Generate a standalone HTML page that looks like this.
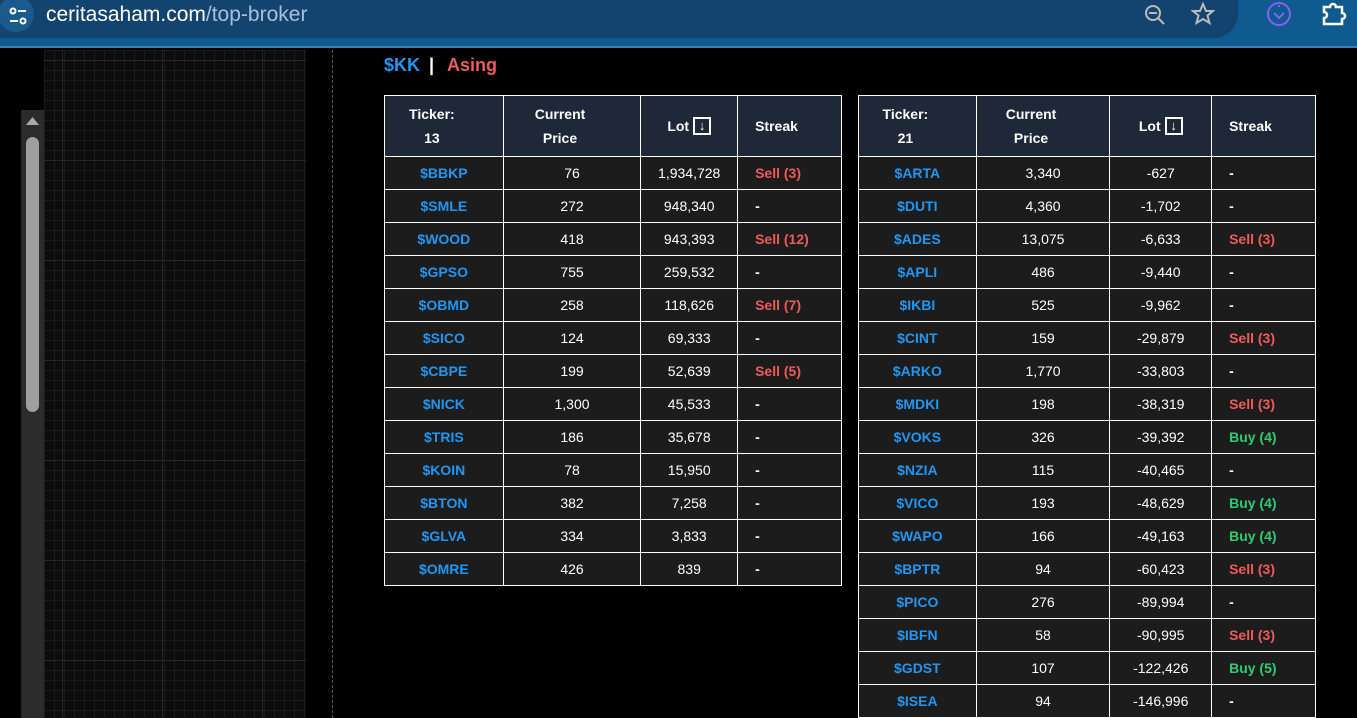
<!DOCTYPE html>
<html><head><meta charset="utf-8"><style>
*{margin:0;padding:0;box-sizing:border-box}
body{width:1357px;height:718px;background:#000;overflow:hidden;position:relative;font-family:"Liberation Sans",Arial,sans-serif}
.top{position:absolute;left:0;top:0;width:1357px;height:48px;background:#0f5a8e;border-bottom:2px solid #3d7fb0}
.pill{position:absolute;left:-20px;top:-10px;width:1258px;height:48px;background:#134470;border-radius:0 0 24px 0}
.ic{position:absolute;left:-2px;top:-4px;width:36px;height:36px;border-radius:50%;background:#1a5a8e}
.url{position:absolute;left:46px;top:3px;font-size:21px;color:#fff;letter-spacing:0}
.url span{color:#a9c0d6}
.left{position:absolute;left:44px;top:50px;width:262px;height:668px;background-color:#0c0c0c;
background-image:linear-gradient(#262626 1px,transparent 1px),linear-gradient(90deg,#262626 1px,transparent 1px),linear-gradient(#1a1a1a 1px,transparent 1px),linear-gradient(90deg,#1a1a1a 1px,transparent 1px);
background-size:100px 100px,100px 100px,10px 10px,10px 10px;background-position:0 10px,18px 0,0 0,0 0}
.sb{position:absolute;left:21px;top:110px;width:23px;height:608px;background:#2b2b2b}
.thumb{position:absolute;left:26px;top:137px;width:13px;height:275px;background:#9f9f9f;border-radius:7px}
.dash{position:absolute;left:332px;top:50px;height:668px;border-left:1px dashed #555}
.title{position:absolute;left:384px;top:55px;font-size:18px;font-weight:bold;white-space:nowrap}
table{position:absolute;border-collapse:collapse;font-size:14px;color:#fff}
td,th{border:1px solid #fff;height:33px;text-align:center;background:#1c1c1c}
th{background:#1e2838;height:61px;font-weight:bold;line-height:24px;padding-right:24px}
td.t{color:#2196f3;font-weight:bold}
td.s{text-align:left;padding-left:17px;font-weight:bold}
.sell{color:#f05a5a}.buy{color:#2ecc71}
.arr{display:inline-block;width:18px;height:18px;border:2px solid #fff;vertical-align:middle;font-size:13px;line-height:14px;margin-left:4px;margin-top:-3px}
</style></head><body>
<div class="top"><div class="pill"></div><div class="ic"></div>
<svg style="position:absolute;left:8px;top:6px" width="20" height="20" viewBox="0 0 20 20" fill="none" stroke="#fff" stroke-width="2"><circle cx="5" cy="5" r="2.5"/><line x1="10" y1="5" x2="18" y2="5"/><line x1="2" y1="15" x2="10" y2="15"/><circle cx="15" cy="15" r="2.5"/></svg>
<div class="url">ceritasaham.com<span>/top-broker</span></div>
<svg style="position:absolute;left:1143px;top:3px" width="24" height="24" viewBox="0 0 24 24" fill="none" stroke="#bbb" stroke-width="2"><circle cx="10" cy="10" r="7"/><line x1="6" y1="10" x2="14" y2="10"/><line x1="15" y1="15" x2="21" y2="21"/></svg>
<svg style="position:absolute;left:1191px;top:2px" width="24" height="24" viewBox="0 0 24 24" fill="none" stroke="#bbb" stroke-width="2"><path d="M12 2l3 7h7l-5.5 4.5 2 7.5L12 17l-6.5 4 2-7.5L2 9h7z"/></svg>
<svg style="position:absolute;left:1266px;top:1px" width="26" height="26" viewBox="0 0 26 26" fill="none" stroke="#8b5cf6" stroke-width="2"><circle cx="13" cy="13" r="11"/><path d="M8 12l5 5 5-5"/><line x1="13" y1="4" x2="13" y2="6"/></svg>
<svg style="position:absolute;left:1321px;top:1px" width="26" height="26" viewBox="0 0 26 26" fill="none" stroke="#fff" stroke-width="2.5"><path d="M3 6h6a3 3 0 0 1 6 0h6v6a3 3 0 0 1 0 6v5H3v-6a3 3 0 0 0 0-6z"/></svg>
</div>
<div class="left"></div>
<div class="sb"></div>
<svg style="position:absolute;left:25px;top:116px" width="15" height="10"><path d="M7.5 1L14 9H1z" fill="#aaa"/></svg>
<div class="thumb"></div>
<div class="dash"></div>
<div class="title"><span style="color:#2196f3">$KK</span><span style="color:#fff;position:absolute;left:45px">|</span><span style="color:#f05a5a;position:absolute;left:63px">Asing</span></div>

<table style="left:384px;top:95px;width:458px">
<colgroup><col style="width:119px"><col style="width:138px"><col style="width:97px"><col style="width:104px"></colgroup>
<tr><th>Ticker:<br>13</th><th>Current<br>Price</th><th style="padding-right:0">Lot<span class="arr">↓</span></th><th style="text-align:left;padding-left:17px">Streak</th></tr>
<tr><td class="t">$BBKP</td><td>76</td><td>1,934,728</td><td class="s sell">Sell (3)</td></tr>
<tr><td class="t">$SMLE</td><td>272</td><td>948,340</td><td class="s">-</td></tr>
<tr><td class="t">$WOOD</td><td>418</td><td>943,393</td><td class="s sell">Sell (12)</td></tr>
<tr><td class="t">$GPSO</td><td>755</td><td>259,532</td><td class="s">-</td></tr>
<tr><td class="t">$OBMD</td><td>258</td><td>118,626</td><td class="s sell">Sell (7)</td></tr>
<tr><td class="t">$SICO</td><td>124</td><td>69,333</td><td class="s">-</td></tr>
<tr><td class="t">$CBPE</td><td>199</td><td>52,639</td><td class="s sell">Sell (5)</td></tr>
<tr><td class="t">$NICK</td><td>1,300</td><td>45,533</td><td class="s">-</td></tr>
<tr><td class="t">$TRIS</td><td>186</td><td>35,678</td><td class="s">-</td></tr>
<tr><td class="t">$KOIN</td><td>78</td><td>15,950</td><td class="s">-</td></tr>
<tr><td class="t">$BTON</td><td>382</td><td>7,258</td><td class="s">-</td></tr>
<tr><td class="t">$GLVA</td><td>334</td><td>3,833</td><td class="s">-</td></tr>
<tr><td class="t">$OMRE</td><td>426</td><td>839</td><td class="s">-</td></tr>
</table>

<table style="left:858px;top:95px;width:458px">
<colgroup><col style="width:118px"><col style="width:134px"><col style="width:102px"><col style="width:104px"></colgroup>
<tr><th>Ticker:<br>21</th><th>Current<br>Price</th><th style="padding-right:0">Lot<span class="arr">↓</span></th><th style="text-align:left;padding-left:17px">Streak</th></tr>
<tr><td class="t">$ARTA</td><td>3,340</td><td>-627</td><td class="s">-</td></tr>
<tr><td class="t">$DUTI</td><td>4,360</td><td>-1,702</td><td class="s">-</td></tr>
<tr><td class="t">$ADES</td><td>13,075</td><td>-6,633</td><td class="s sell">Sell (3)</td></tr>
<tr><td class="t">$APLI</td><td>486</td><td>-9,440</td><td class="s">-</td></tr>
<tr><td class="t">$IKBI</td><td>525</td><td>-9,962</td><td class="s">-</td></tr>
<tr><td class="t">$CINT</td><td>159</td><td>-29,879</td><td class="s sell">Sell (3)</td></tr>
<tr><td class="t">$ARKO</td><td>1,770</td><td>-33,803</td><td class="s">-</td></tr>
<tr><td class="t">$MDKI</td><td>198</td><td>-38,319</td><td class="s sell">Sell (3)</td></tr>
<tr><td class="t">$VOKS</td><td>326</td><td>-39,392</td><td class="s buy">Buy (4)</td></tr>
<tr><td class="t">$NZIA</td><td>115</td><td>-40,465</td><td class="s">-</td></tr>
<tr><td class="t">$VICO</td><td>193</td><td>-48,629</td><td class="s buy">Buy (4)</td></tr>
<tr><td class="t">$WAPO</td><td>166</td><td>-49,163</td><td class="s buy">Buy (4)</td></tr>
<tr><td class="t">$BPTR</td><td>94</td><td>-60,423</td><td class="s sell">Sell (3)</td></tr>
<tr><td class="t">$PICO</td><td>276</td><td>-89,994</td><td class="s">-</td></tr>
<tr><td class="t">$IBFN</td><td>58</td><td>-90,995</td><td class="s sell">Sell (3)</td></tr>
<tr><td class="t">$GDST</td><td>107</td><td>-122,426</td><td class="s buy">Buy (5)</td></tr>
<tr><td class="t">$ISEA</td><td>94</td><td>-146,996</td><td class="s">-</td></tr>
</table>
</body></html>
